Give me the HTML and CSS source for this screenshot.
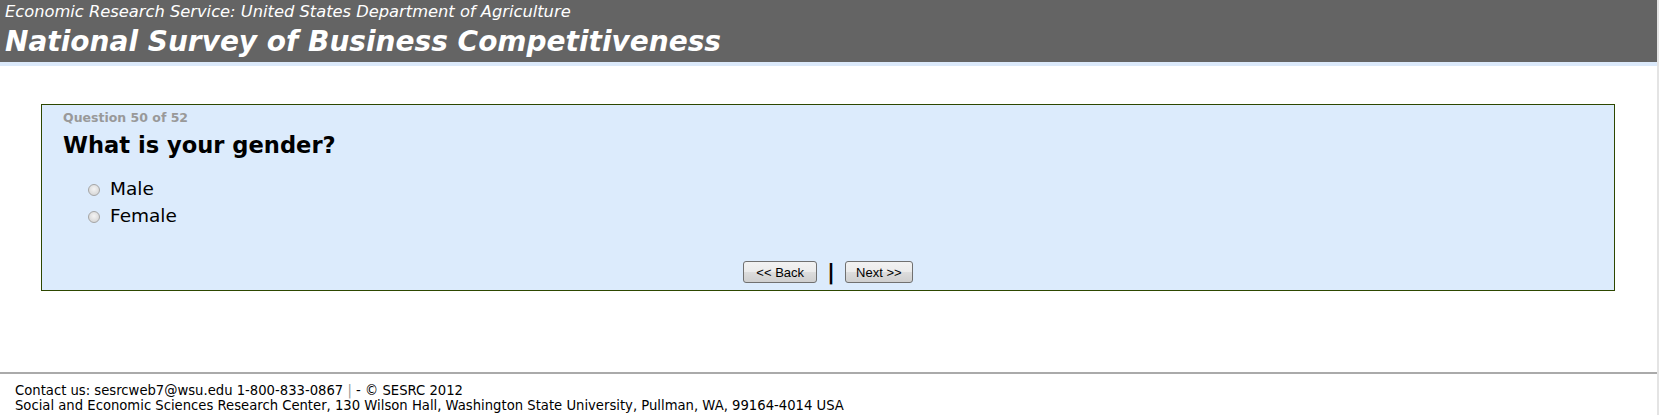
FILE: index.html
```html
<!DOCTYPE html>
<html>
<head>
    <meta charset="UTF-8">
    <title>National Survey of Business Competitiveness</title>
    <link rel="stylesheet" href="styles.css">
</head>
<body>
    <div class="page">
        <!-- banner -->
        <div class="banner">
            <div class="agency">Economic Research Service: United States Department of Agriculture</div>
            <h1 class="survey-title">National Survey of Business Competitiveness</h1>
        </div>
        <div class="banner-strip"></div>

        <!-- question -->
        <div class="content">
            <form class="question-box">
                <div class="question-count">Question 50 of 52</div>
                <h2 class="question-text">What is your gender?</h2>
                <ul class="answers">
                    <li class="answer"><input type="radio" name="gender" id="male"><label for="male">Male</label></li>
                    <li class="answer"><input type="radio" name="gender" id="female"><label for="female">Female</label></li>
                </ul>
                <div class="nav">
                    <button type="button" class="nav-button">&lt;&lt; Back</button>
                    <span class="nav-sep">|</span>
                    <button type="button" class="nav-button">Next &gt;&gt;</button>
                </div>
            </form>
        </div>

        <!-- footer -->
        <div class="footer">
            <div>Contact us: sesrcweb7@wsu.edu 1-800-833-0867 <span class="pipe">|</span> - &copy; SESRC 2012</div>
            <div>Social and Economic Sciences Research Center, 130 Wilson Hall, Washington State University, Pullman, WA, 99164-4014 USA</div>
        </div>
    </div>
</body>
</html>
```

FILE: styles.css
```css
body {
    margin: 0;
    background: #fff;
    font-family: "DejaVu Sans", Verdana, sans-serif;
}
.page {
    width: 1657px;
    min-height: 415px;
    border-right: 2px solid #e4e4e4;
}
.banner {
    height: 62px;
    background: #646464;
    color: #fff;
    padding: 1px 0 0 5px;
    box-sizing: border-box;
}
.agency {
    font-style: italic;
    font-size: 16.3px;
    line-height: 22px;
}
.survey-title {
    margin: 0;
    font-size: 28px;
    font-style: italic;
    font-weight: bold;
    line-height: 38px;
}
.banner-strip {
    height: 4px;
    background: #dbe9fa;
}
.content {
    padding: 38px 42px 0 41px;
}
.question-box {
    background: #dcebfc;
    border: 1px solid #2d4700;
    height: 187px;
    box-sizing: border-box;
    padding: 5px 21px 0 21px;
}
.question-count {
    color: #999;
    font-size: 12.5px;
    font-weight: bold;
    line-height: 16px;
}
.question-text {
    margin: 0;
    font-size: 22.6px;
    font-weight: bold;
    color: #000;
    line-height: 38px;
}
.answers {
    list-style: none;
    margin: 12px 0 0 0;
    padding: 0 0 0 25px;
}
.answer {
    display: flex;
    align-items: center;
    font-size: 18.5px;
    line-height: 26.5px;
}
.answer input {
    appearance: none;
    width: 12px;
    height: 12px;
    margin: 2px 10px 0 0;
    border: 1px solid #a5a5a5;
    border-radius: 50%;
    background: radial-gradient(circle at 50% 40%, #f4f4f4, #cfcfcf);
    box-sizing: border-box;
}
.nav {
    display: flex;
    justify-content: center;
    align-items: center;
    gap: 10px;
    margin-top: 32px;
}
.nav-button {
    font-family: "Liberation Sans", Arial, sans-serif;
    font-size: 13px;
    height: 22px;
    padding: 0 12px;
    border: 1px solid #707070;
    border-radius: 3px;
    background: linear-gradient(#f2f2f2, #ebebeb 50%, #dddddd 50%, #cfcfcf);
    color: #000;
}
.nav-button + .nav-sep + .nav-button {
    padding: 0 10px;
}
.nav-sep {
    font-size: 22px;
    font-weight: bold;
    line-height: 22px;
}
.footer {
    margin-top: 81px;
    border-top: 2px solid #aaa;
    padding: 9px 15px 0 15px;
    font-size: 13.2px;
    line-height: 15px;
    color: #000;
}
.pipe {
    color: #999;
}
```
